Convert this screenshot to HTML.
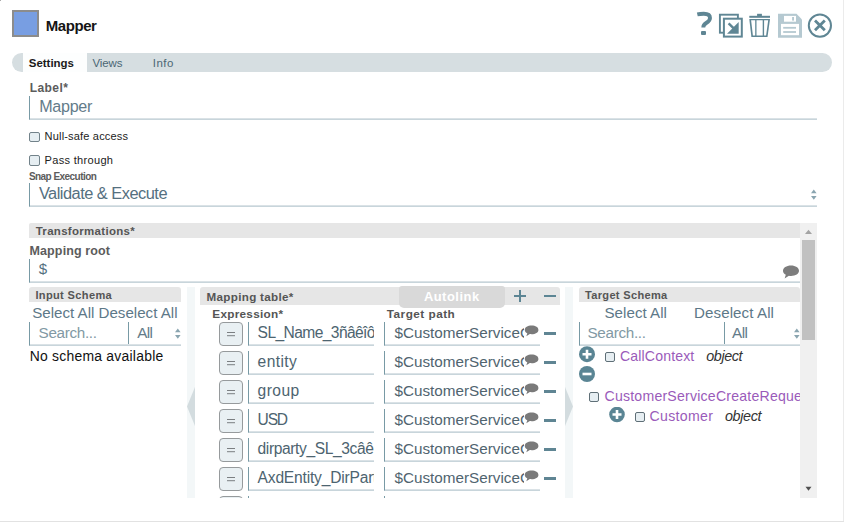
<!DOCTYPE html>
<html><head><meta charset="utf-8">
<style>
html,body{margin:0;padding:0;width:844px;height:522px;overflow:hidden;background:#fff;font-family:"Liberation Sans",sans-serif;}
.a{position:absolute;}
.t{position:absolute;white-space:nowrap;line-height:1;}
.m{display:inline-block;width:0;height:0;vertical-align:baseline;}
.inp{position:absolute;border-left:1px solid #789aa5;border-bottom:1px solid #c8d5db;box-shadow:inset 0 -1px 0 #dae2e6;box-sizing:border-box;}
.hdr{position:absolute;background:#e6e6e6;border-radius:3px 3px 0 0;}
.eq{position:absolute;width:24px;height:24px;box-sizing:border-box;border:1px solid #969a9c;border-radius:4px;background:#e9f0f3;}
.eq:before{content:"";position:absolute;left:7px;top:8.8px;width:8px;height:1.6px;background:#7b7f82;box-shadow:0 3.2px 0 #7b7f82;}
.mn{position:absolute;width:12px;height:2px;background:#5f8593;}
.chk{position:absolute;width:10px;height:10px;box-sizing:border-box;border:1px solid #5f6f77;border-radius:2px;background:#e6eef2;}
</style></head><body>
<div class="a" style="left:843px;top:0;width:1px;height:522px;background:#ebebeb"></div>
<div class="a" style="left:0;top:521px;width:844px;height:1px;background:#e2e2e2"></div>
<div class="a" style="left:0;top:0;width:1px;height:1px;background:#aaa"></div>

<div class="a" style="left:12px;top:10px;width:27px;height:27px;box-sizing:border-box;border:2px solid #8c8c8c;background:#789ee2"></div>

<svg class="a" style="left:690px;top:5px" width="150" height="40" viewBox="690 5 150 40">
  <path d="M697.3 14.4 C699.5 13.9 701.5 13.8 703.8 13.8 C707.8 13.8 710 15.3 710 18 C710 20.6 708.2 21.8 706.2 23 C704.2 24.2 703.3 25 703.3 27.5" fill="none" stroke="#5f8694" stroke-width="3.9"/><rect x="701" y="31" width="5" height="3.9" rx="1" fill="#5f8694"/>
  <rect x="719.9" y="14.7" width="18" height="18" fill="none" stroke="#5f8694" stroke-width="1.9"/>
  <rect x="723.9" y="18.7" width="17.9" height="17.9" fill="#fff" stroke="#5f8694" stroke-width="2"/>
  <path d="M738.7 22 L738.7 33.7 L727 33.7 Z" fill="#5f8694"/>
  <path d="M728.6 23.3 L734 28.7" stroke="#5f8694" stroke-width="2.4"/>
  <rect x="749.3" y="15.8" width="20.7" height="2" fill="#5f8694"/>
  <rect x="757.1" y="13.8" width="4.8" height="2.4" fill="#5f8694"/>
  <path d="M749.3 18.9 L770 18.9 L767.5 36.9 L751.4 36.9 Z" fill="#5f8694"/>
  <path d="M751.1 20.3 L755.2 20.3 L755.2 35.5 L752.9 35.5 Z M756.5 20.3 L762.7 20.3 L762.7 35.5 L756.5 35.5 Z M764.1 20.3 L768.2 20.3 L766.1 35.5 L764.1 35.5 Z" fill="#fff"/>
  <path d="M778 13.8 L796.5 13.8 L802 19.6 L802 37.7 L778 37.7 Z" fill="#b5c9d1"/>
  <rect x="784" y="15.9" width="12" height="5.8" fill="#fff"/>
  <rect x="792.1" y="17" width="1.9" height="3.6" fill="#b5c9d1"/>
  <rect x="781" y="23.9" width="18" height="11.3" fill="#fff"/>
  <rect x="783.2" y="26.9" width="12.8" height="1.8" fill="#b5c9d1"/>
  <rect x="783.2" y="31.1" width="12.8" height="1.8" fill="#b5c9d1"/>
  <circle cx="819.9" cy="25.6" r="11.1" fill="none" stroke="#5f8694" stroke-width="2"/>
  <path d="M815 20.5 L824.8 30.3 M824.8 20.5 L815 30.3" stroke="#5f8694" stroke-width="2.8"/>
</svg>

<div class="a" style="left:12px;top:52.5px;width:820px;height:19.5px;border-radius:9.75px;background:#d6dee1"></div>
<div class="a" style="left:23px;top:52.5px;width:64px;height:19.5px;background:#fdfefe"></div>

<div class="inp" style="left:29px;top:96px;width:788px;height:24px"></div>
<div class="chk" style="left:29px;top:131.5px;width:10.5px;height:10.5px;border-color:#72828a"></div>
<div class="chk" style="left:29px;top:155px;width:10.5px;height:10.5px;border-color:#72828a"></div>
<div class="inp" style="left:29px;top:183px;width:788px;height:24px"></div>
<svg class="a" style="left:810px;top:188px" width="8" height="14"><path d="M1 5.2 L3.8 1.6 L6.6 5.2Z M1 8 L3.8 11.8 L6.6 8Z" fill="#8aa5b0"/></svg>

<div class="hdr" style="left:29px;top:223px;width:771px;height:15px;border-radius:2px 0 0 0"></div>
<div class="a" style="left:800px;top:223px;width:17px;height:275px;background:#f0f0f0"></div>
<div class="a" style="left:802px;top:240px;width:13px;height:100px;background:#c1c1c1"></div>
<svg class="a" style="left:800px;top:223px" width="17" height="275"><path d="M5 11 L8.5 6.8 L12 11Z" fill="#a3a3a3"/><path d="M5.5 263.8 L8.5 267.8 L11.5 263.8Z" fill="#505050"/></svg>

<div class="inp" style="left:29px;top:259px;width:771px;height:24px"></div>
<svg class="a" style="left:782px;top:264.8px" width="18" height="14"><path d="M9 0.5 C13.6 0.5 17 2.8 17 5.8 C17 8.8 13.6 11 9 11 C8.3 11 7.6 10.95 6.9 10.8 L2.6 13.5 L3.8 9.8 C1.9 8.8 1 7.4 1 5.8 C1 2.8 4.4 0.5 9 0.5Z" fill="#7d7d7d"/></svg>

<div class="a" style="left:187px;top:287px;width:8px;height:211px;background:#f3f7f8"></div>
<svg class="a" style="left:187px;top:386px" width="8" height="41"><path d="M8 1 L0 20.5 L8 40Z" fill="#d3dcdf"/></svg>
<div class="a" style="left:565px;top:287px;width:8px;height:211px;background:#f3f7f8"></div>
<svg class="a" style="left:565px;top:386px" width="8" height="41"><path d="M0 1 L8 20.5 L0 40Z" fill="#d3dcdf"/></svg>

<div class="hdr" style="left:29px;top:287px;width:152px;height:15px"></div>
<div class="inp" style="left:29px;top:322px;width:152px;height:24px"></div>
<div class="a" style="left:128px;top:322px;width:1px;height:22px;background:#789aa5"></div>
<svg class="a" style="left:174px;top:327px" width="8" height="14"><path d="M1 5.2 L3.8 1.6 L6.6 5.2Z M1 8 L3.8 11.8 L6.6 8Z" fill="#8aa5b0"/></svg>

<div class="hdr" style="left:200px;top:287px;width:360px;height:18px"></div>
<div class="a" style="left:399px;top:286px;width:106px;height:21.7px;background:#d9d9d9;border-radius:3px 3px 5px 5px"></div>
<div class="a" style="left:514px;top:294.6px;width:12px;height:2px;background:#5c8594"></div>
<div class="a" style="left:519px;top:289.6px;width:2px;height:12px;background:#5c8594"></div>
<div class="a" style="left:544px;top:294.6px;width:12px;height:2px;background:#5c8594"></div>

<div class="eq" style="left:219px;top:322px"></div>
<div class="inp" style="left:248px;top:322px;width:126px;height:24px;overflow:hidden">
<div class="t" id="ev0" style="left:8.60px;top:3.01px;font-size:15.60px;letter-spacing:-0.600px;color:#4d6470;"><i class="m"></i>SL_Name_3ñâêîô</div>
</div>
<div class="inp" style="left:384px;top:322px;width:156px;height:24px">
<div class="a" style="left:0;top:0;width:139px;height:22px;overflow:hidden">
<div class="t" id="tv0" style="left:9.50px;top:3.01px;font-size:15.26px;letter-spacing:0.000px;color:#50646f;"><i class="m"></i>$CustomerServiceCreateRequest</div>
</div>
<svg class="a" style="left:139.3px;top:3px" width="15" height="12"><path d="M7.6 0.6 C11.6 0.6 14.4 2.4 14.4 4.9 C14.4 7.4 11.6 9.2 7.6 9.2 C7 9.2 6.4 9.15 5.8 9.05 L2.3 11.3 L3.3 8.3 C1.7 7.5 0.8 6.3 0.8 4.9 C0.8 2.4 3.6 0.6 7.6 0.6Z" fill="#7a7a7a"/></svg>
</div>
<div class="mn" style="left:544px;top:332.2px;height:2.4px"></div>
<div class="eq" style="left:219px;top:351px"></div>
<div class="inp" style="left:248px;top:351px;width:126px;height:24px;overflow:hidden">
<div class="t" id="ev1" style="left:8.60px;top:3.01px;font-size:15.60px;letter-spacing:0.400px;color:#4d6470;"><i class="m"></i>entity</div>
</div>
<div class="inp" style="left:384px;top:351px;width:156px;height:24px">
<div class="a" style="left:0;top:0;width:139px;height:22px;overflow:hidden">
<div class="t" id="tv1" style="left:9.50px;top:3.01px;font-size:15.26px;letter-spacing:0.000px;color:#50646f;"><i class="m"></i>$CustomerServiceCreateRequest</div>
</div>
<svg class="a" style="left:139.3px;top:3px" width="15" height="12"><path d="M7.6 0.6 C11.6 0.6 14.4 2.4 14.4 4.9 C14.4 7.4 11.6 9.2 7.6 9.2 C7 9.2 6.4 9.15 5.8 9.05 L2.3 11.3 L3.3 8.3 C1.7 7.5 0.8 6.3 0.8 4.9 C0.8 2.4 3.6 0.6 7.6 0.6Z" fill="#7a7a7a"/></svg>
</div>
<div class="mn" style="left:544px;top:361.2px;height:2.4px"></div>
<div class="eq" style="left:219px;top:380px"></div>
<div class="inp" style="left:248px;top:380px;width:126px;height:24px;overflow:hidden">
<div class="t" id="ev2" style="left:8.60px;top:3.01px;font-size:15.60px;letter-spacing:0.450px;color:#4d6470;"><i class="m"></i>group</div>
</div>
<div class="inp" style="left:384px;top:380px;width:156px;height:24px">
<div class="a" style="left:0;top:0;width:139px;height:22px;overflow:hidden">
<div class="t" id="tv2" style="left:9.50px;top:3.01px;font-size:15.26px;letter-spacing:0.000px;color:#50646f;"><i class="m"></i>$CustomerServiceCreateRequest</div>
</div>
<svg class="a" style="left:139.3px;top:3px" width="15" height="12"><path d="M7.6 0.6 C11.6 0.6 14.4 2.4 14.4 4.9 C14.4 7.4 11.6 9.2 7.6 9.2 C7 9.2 6.4 9.15 5.8 9.05 L2.3 11.3 L3.3 8.3 C1.7 7.5 0.8 6.3 0.8 4.9 C0.8 2.4 3.6 0.6 7.6 0.6Z" fill="#7a7a7a"/></svg>
</div>
<div class="mn" style="left:544px;top:390.2px;height:2.4px"></div>
<div class="eq" style="left:219px;top:409px"></div>
<div class="inp" style="left:248px;top:409px;width:126px;height:24px;overflow:hidden">
<div class="t" id="ev3" style="left:8.60px;top:3.01px;font-size:15.60px;letter-spacing:-1.200px;color:#4d6470;"><i class="m"></i>USD</div>
</div>
<div class="inp" style="left:384px;top:409px;width:156px;height:24px">
<div class="a" style="left:0;top:0;width:139px;height:22px;overflow:hidden">
<div class="t" id="tv3" style="left:9.50px;top:3.01px;font-size:15.26px;letter-spacing:0.000px;color:#50646f;"><i class="m"></i>$CustomerServiceCreateRequest</div>
</div>
<svg class="a" style="left:139.3px;top:3px" width="15" height="12"><path d="M7.6 0.6 C11.6 0.6 14.4 2.4 14.4 4.9 C14.4 7.4 11.6 9.2 7.6 9.2 C7 9.2 6.4 9.15 5.8 9.05 L2.3 11.3 L3.3 8.3 C1.7 7.5 0.8 6.3 0.8 4.9 C0.8 2.4 3.6 0.6 7.6 0.6Z" fill="#7a7a7a"/></svg>
</div>
<div class="mn" style="left:544px;top:419.2px;height:2.4px"></div>
<div class="eq" style="left:219px;top:438px"></div>
<div class="inp" style="left:248px;top:438px;width:126px;height:24px;overflow:hidden">
<div class="t" id="ev4" style="left:8.60px;top:3.01px;font-size:15.60px;letter-spacing:-0.400px;color:#4d6470;"><i class="m"></i>dirparty_SL_3câê</div>
</div>
<div class="inp" style="left:384px;top:438px;width:156px;height:24px">
<div class="a" style="left:0;top:0;width:139px;height:22px;overflow:hidden">
<div class="t" id="tv4" style="left:9.50px;top:3.01px;font-size:15.26px;letter-spacing:0.000px;color:#50646f;"><i class="m"></i>$CustomerServiceCreateRequest</div>
</div>
<svg class="a" style="left:139.3px;top:3px" width="15" height="12"><path d="M7.6 0.6 C11.6 0.6 14.4 2.4 14.4 4.9 C14.4 7.4 11.6 9.2 7.6 9.2 C7 9.2 6.4 9.15 5.8 9.05 L2.3 11.3 L3.3 8.3 C1.7 7.5 0.8 6.3 0.8 4.9 C0.8 2.4 3.6 0.6 7.6 0.6Z" fill="#7a7a7a"/></svg>
</div>
<div class="mn" style="left:544px;top:448.2px;height:2.4px"></div>
<div class="eq" style="left:219px;top:467px"></div>
<div class="inp" style="left:248px;top:467px;width:126px;height:24px;overflow:hidden">
<div class="t" id="ev5" style="left:8.60px;top:3.01px;font-size:15.60px;letter-spacing:-0.200px;color:#4d6470;"><i class="m"></i>AxdEntity_DirParty</div>
</div>
<div class="inp" style="left:384px;top:467px;width:156px;height:24px">
<div class="a" style="left:0;top:0;width:139px;height:22px;overflow:hidden">
<div class="t" id="tv5" style="left:9.50px;top:3.01px;font-size:15.26px;letter-spacing:0.000px;color:#50646f;"><i class="m"></i>$CustomerServiceCreateRequest</div>
</div>
<svg class="a" style="left:139.3px;top:3px" width="15" height="12"><path d="M7.6 0.6 C11.6 0.6 14.4 2.4 14.4 4.9 C14.4 7.4 11.6 9.2 7.6 9.2 C7 9.2 6.4 9.15 5.8 9.05 L2.3 11.3 L3.3 8.3 C1.7 7.5 0.8 6.3 0.8 4.9 C0.8 2.4 3.6 0.6 7.6 0.6Z" fill="#7a7a7a"/></svg>
</div>
<div class="mn" style="left:544px;top:477.2px;height:2.4px"></div>
<div class="eq" style="left:219px;top:496px"></div>
<div class="inp" style="left:248px;top:496px;width:126px;height:24px;overflow:hidden">
</div>
<div class="inp" style="left:384px;top:496px;width:156px;height:24px">
</div>
<div class="a" style="left:195px;top:498px;width:370px;height:23px;background:#fff"></div>

<div class="hdr" style="left:579px;top:287px;width:221px;height:15px"></div>
<div class="inp" style="left:579px;top:322px;width:221px;height:24px"></div>
<div class="a" style="left:724px;top:322px;width:1px;height:22px;background:#789aa5"></div>
<svg class="a" style="left:793px;top:327px" width="8" height="14"><path d="M1 5.2 L3.8 1.6 L6.6 5.2Z M1 8 L3.8 11.8 L6.6 8Z" fill="#8aa5b0"/></svg>

<svg class="a" style="left:579px;top:346px" width="17" height="17"><circle cx="8" cy="8.2" r="8" fill="#5a8594"/><path d="M3.5 8.2 H12.5 M8 3.7 V12.7" stroke="#fff" stroke-width="2.6"/></svg>
<div class="chk" style="left:605px;top:352px"></div>
<svg class="a" style="left:579px;top:366px" width="17" height="17"><circle cx="8" cy="8" r="8" fill="#5a8594"/><path d="M3.5 8 H12.5" stroke="#fff" stroke-width="2.6"/></svg>
<div class="chk" style="left:589px;top:391.5px"></div>
<div class="a" style="left:600px;top:385px;width:200px;height:22px;overflow:hidden"><div class="t" id="csr" style="left:4.50px;top:3.61px;font-size:14.10px;letter-spacing:0.220px;color:#9a5bba;"><i class="m"></i>CustomerServiceCreateRequest</div></div>
<svg class="a" style="left:609px;top:407px" width="17" height="17"><circle cx="8" cy="7.5" r="7.8" fill="#5a8594"/><path d="M3.5 7.5 H12.5 M8 3 V12" stroke="#fff" stroke-width="2.6"/></svg>
<div class="chk" style="left:635px;top:412px"></div>

<div class="t" id="title" style="left:45.70px;top:19.01px;font-size:14.97px;letter-spacing:-0.407px;color:#151515;font-weight:bold;"><i class="m"></i>Mapper</div>
<div class="t" id="tab1" style="left:28.80px;top:58.01px;font-size:11.48px;letter-spacing:-0.014px;color:#1a1a1a;font-weight:bold;"><i class="m"></i>Settings</div>
<div class="t" id="tab2" style="left:92.50px;top:58.01px;font-size:11.48px;letter-spacing:-0.104px;color:#4b6674;"><i class="m"></i>Views</div>
<div class="t" id="tab3" style="left:152.70px;top:58.01px;font-size:11.48px;letter-spacing:0.549px;color:#4b6674;"><i class="m"></i>Info</div>
<div class="t" id="lbl" style="left:29.70px;top:81.60px;font-size:12.06px;letter-spacing:0.399px;color:#5c5c5c;font-weight:bold;"><i class="m"></i>Label*</div>
<div class="t" id="lblv" style="left:39.20px;top:97.81px;font-size:16.13px;letter-spacing:-0.282px;color:#637b89;"><i class="m"></i>Mapper</div>
<div class="t" id="cb1" style="left:44.60px;top:130.71px;font-size:11.05px;letter-spacing:0.158px;color:#222;"><i class="m"></i>Null-safe access</div>
<div class="t" id="cb2" style="left:44.60px;top:154.90px;font-size:11.05px;letter-spacing:0.300px;color:#222;"><i class="m"></i>Pass through</div>
<div class="t" id="snap" style="left:28.90px;top:172.11px;font-size:10.03px;letter-spacing:-0.549px;color:#5c5c5c;font-weight:bold;"><i class="m"></i>Snap Execution</div>
<div class="t" id="snapv" style="left:38.90px;top:184.61px;font-size:16.42px;letter-spacing:-0.516px;color:#55707f;"><i class="m"></i>Validate & Execute</div>
<div class="t" id="trans" style="left:35.70px;top:226.11px;font-size:11.48px;letter-spacing:0.311px;color:#555;font-weight:bold;"><i class="m"></i>Transformations*</div>
<div class="t" id="mroot" style="left:29.50px;top:245.00px;font-size:12.50px;letter-spacing:0.123px;color:#5c5c5c;font-weight:bold;"><i class="m"></i>Mapping root</div>
<div class="t" id="dollar" style="left:38.80px;top:260.51px;font-size:15.12px;letter-spacing:0.000px;color:#55707f;"><i class="m"></i>$</div>
<div class="t" id="insch" style="left:35.40px;top:289.81px;font-size:11.05px;letter-spacing:0.354px;color:#555;font-weight:bold;"><i class="m"></i>Input Schema</div>
<div class="t" id="insel" style="left:32.20px;top:304.60px;font-size:15.12px;letter-spacing:0.002px;color:#5d7888;"><i class="m"></i>Select All Deselect All</div>
<div class="t" id="insrch" style="left:38.60px;top:324.70px;font-size:15.26px;letter-spacing:-0.335px;color:#8299a4;"><i class="m"></i>Search...</div>
<div class="t" id="inall" style="left:137.20px;top:324.70px;font-size:15.26px;letter-spacing:-0.578px;color:#637b89;"><i class="m"></i>All</div>
<div class="t" id="nosch" style="left:29.70px;top:349.81px;font-size:13.95px;letter-spacing:0.232px;color:#111;"><i class="m"></i>No schema available</div>
<div class="t" id="mtab" style="left:206.60px;top:291.11px;font-size:11.63px;letter-spacing:0.309px;color:#555;font-weight:bold;"><i class="m"></i>Mapping table*</div>
<div class="t" id="autol" style="left:423.90px;top:290.81px;font-size:12.94px;letter-spacing:0.492px;color:#fff;font-weight:bold;"><i class="m"></i>Autolink</div>
<div class="t" id="expr" style="left:212.30px;top:308.21px;font-size:11.77px;letter-spacing:0.265px;color:#555;font-weight:bold;"><i class="m"></i>Expression*</div>
<div class="t" id="tpath" style="left:386.80px;top:307.71px;font-size:11.77px;letter-spacing:0.477px;color:#555;font-weight:bold;"><i class="m"></i>Target path</div>
<div class="t" id="tsch" style="left:585.00px;top:289.81px;font-size:11.05px;letter-spacing:0.321px;color:#555;font-weight:bold;"><i class="m"></i>Target Schema</div>
<div class="t" id="tsel1" style="left:604.50px;top:304.60px;font-size:15.12px;letter-spacing:0.036px;color:#5d7888;"><i class="m"></i>Select All</div>
<div class="t" id="tsel2" style="left:694.00px;top:304.60px;font-size:15.12px;letter-spacing:0.092px;color:#5d7888;"><i class="m"></i>Deselect All</div>
<div class="t" id="tsrch" style="left:587.50px;top:324.70px;font-size:15.26px;letter-spacing:-0.322px;color:#8299a4;"><i class="m"></i>Search...</div>
<div class="t" id="tall" style="left:732.00px;top:324.70px;font-size:15.26px;letter-spacing:-0.478px;color:#637b89;"><i class="m"></i>All</div>
<div class="t" id="cc" style="left:620.00px;top:348.50px;font-size:14.10px;letter-spacing:0.142px;color:#9a5bba;"><i class="m"></i>CallContext</div>
<div class="t" id="ccobj" style="left:706.30px;top:348.50px;font-size:14.39px;letter-spacing:-0.442px;color:#333;font-style:italic;"><i class="m"></i>object</div>
<div class="t" id="cust" style="left:649.50px;top:409.01px;font-size:14.10px;letter-spacing:0.340px;color:#9a5bba;"><i class="m"></i>Customer</div>
<div class="t" id="custobj" style="left:725.00px;top:409.01px;font-size:14.39px;letter-spacing:-0.382px;color:#333;font-style:italic;"><i class="m"></i>object</div>
</body></html>
